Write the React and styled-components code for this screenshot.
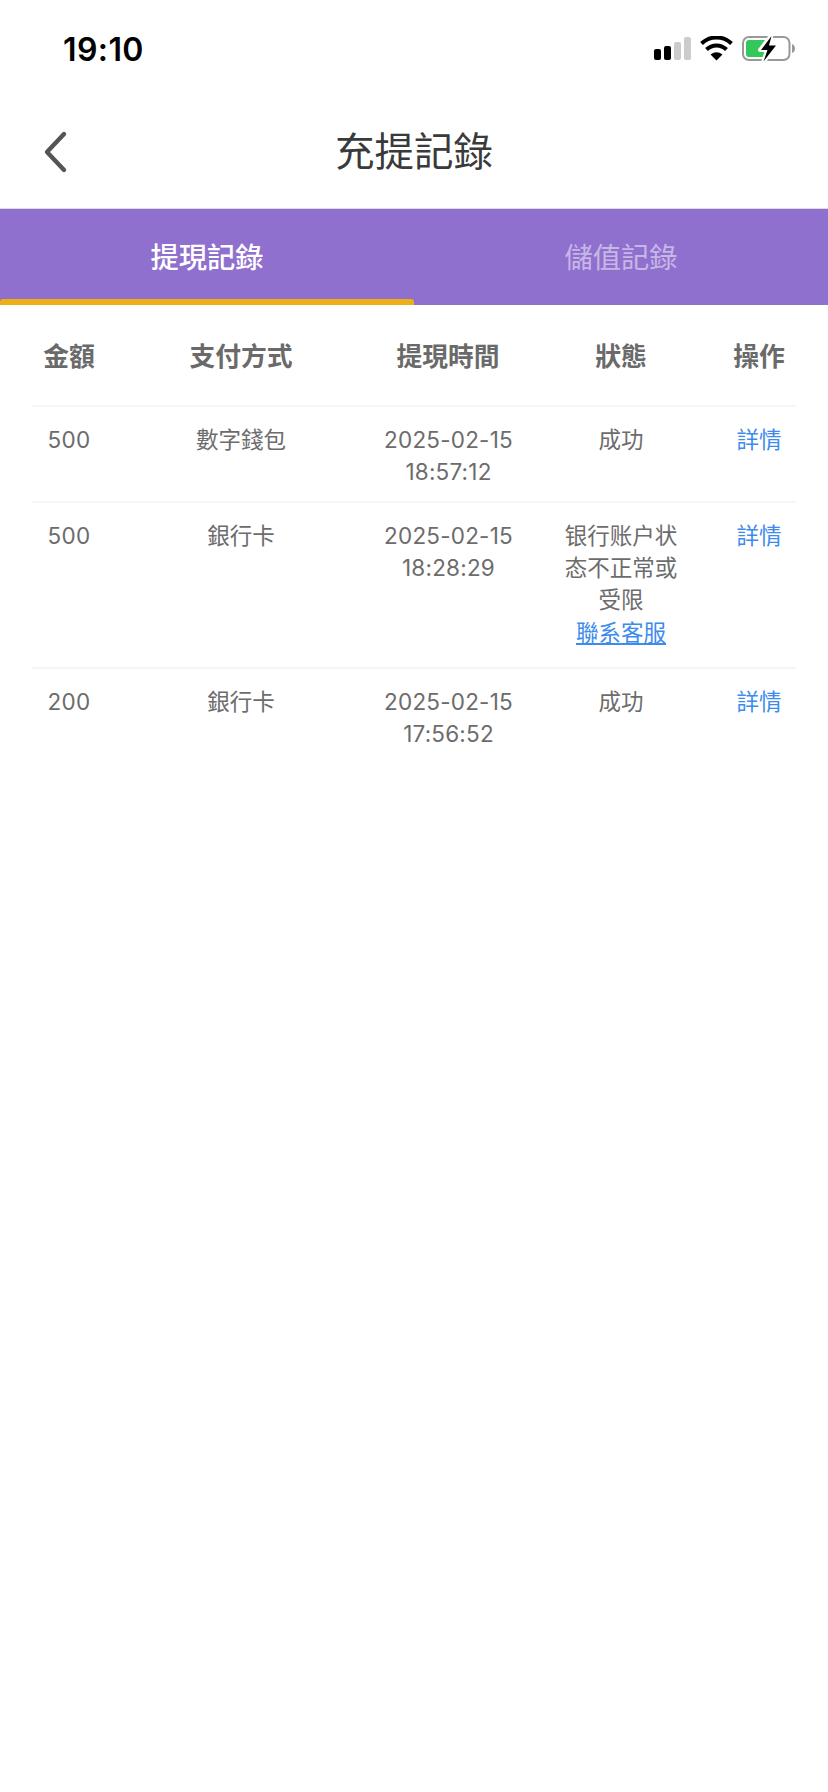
import React from "react";
import styled, { createGlobalStyle } from "styled-components";

const Global = createGlobalStyle`
  html, body { margin: 0; padding: 0; background: #fff; }
  body { font-family: Inter, "Noto Sans CJK TC", sans-serif; }
`;

const Page = styled.div`
  width: 828px;
  height: 1792px;
  background: #fff;
  overflow: hidden;
`;

const StatusBar = styled.div`
  height: 88px;
  display: flex;
  justify-content: space-between;
  align-items: flex-start;
  padding: 30px 33px 0 63px;
  box-sizing: border-box;
`;

const Clock = styled.span`
  font: 600 32px/40px Inter, sans-serif;
  color: #000;
  letter-spacing: 0.4px;
`;

const StatusIcons = styled.svg`
  width: 142px;
  height: 26px;
  margin-top: 6px;
  display: block;
`;

const NavBar = styled.div`
  height: 120px;
  position: relative;
  display: flex;
  align-items: center;
  justify-content: center;
  border-bottom: 1px solid #dcdcdc;
`;

const BackIcon = styled.svg`
  position: absolute;
  left: 42px;
  top: 42px;
  width: 26px;
  height: 44px;
`;

const Title = styled.h1`
  margin: 2px 0 0;
  font: 400 39.5px/48px "Noto Sans CJK TC", sans-serif;
  color: #3a3a3a;
`;

const Tabs = styled.div`
  display: flex;
  height: 96px;
  background: #9070ce;
`;

const Tab = styled.div`
  flex: 1;
  position: relative;
  display: flex;
  align-items: center;
  justify-content: center;
  padding-bottom: 3px;
  font: ${(p) => (p.$active ? 500 : 400)} 28.3px/40px "Noto Sans CJK TC", sans-serif;
  color: ${(p) => (p.$active ? "#fff" : "rgba(255,255,255,0.5)")};
  box-sizing: border-box;

  ${(p) =>
    p.$active &&
    `&::after {
      content: "";
      position: absolute;
      left: 0;
      right: 0;
      bottom: 0;
      height: 6px;
      border-radius: 3px 3px 0 0;
      background: #ecb016;
    }`}
`;

const Table = styled.div`
  margin: 0 32px;
`;

const Row = styled.div`
  display: grid;
  grid-template-columns: 74px 270px 144px 202px 74px;
  border-bottom: 2px solid ${(p) => (p.$last ? "transparent" : "#f5f5f5")};
  padding: ${(p) => (p.$head ? "30px 0" : "17px 0 13px")};
`;

const HeadCell = styled.div`
  text-align: center;
  font: 600 25.8px/40px "Noto Sans CJK TC", sans-serif;
  color: #6a6a6a;
`;

const Cell = styled.div`
  text-align: center;
  font: 400 22.5px/32px Inter, "Noto Sans CJK TC", sans-serif;
  color: #6c6c6c;
`;

const TimeCell = styled(Cell)`
  letter-spacing: 0.2px;
  padding-left: 1px;
`;

const Amount = styled(Cell)`
  letter-spacing: 0.3px;
`;

const StatusCell = styled(Cell)`
  padding: 0 34px;
`;

const Support = styled.a`
  display: block;
  margin: 1px 0 5px;
  color: #3b8cec;
  text-decoration: underline;
`;

const Detail = styled.a`
  color: #3b8cec;
`;

const rows = [
  { amount: "500", method: "數字錢包", date: "2025-02-15", time: "18:57:12", status: "成功" },
  { amount: "500", method: "銀行卡", date: "2025-02-15", time: "18:28:29", status: "银行账户状态不正常或受限", support: true },
  { amount: "200", method: "銀行卡", date: "2025-02-15", time: "17:56:52", status: "成功", last: true },
];

const heads = ["金額", "支付方式", "提現時間", "狀態", "操作"];

export default function App() {
  return (
    <Page>
      <Global />
      <StatusBar>
        <Clock>19:10</Clock>
        <StatusIcons viewBox="652 37 142 26">
          <rect x="653" y="50" width="7" height="11" rx="2" fill="#000" />
          <rect x="663" y="47" width="7" height="14" rx="2" fill="#000" />
          <rect x="673" y="43" width="7" height="18" rx="2" fill="#ccc" />
          <rect x="683" y="38" width="7" height="23" rx="2" fill="#ccc" />
          <path d="M700.5 44.5 C709 36.5 722 36.5 730.5 44.5" fill="none" stroke="#000" strokeWidth="4" strokeLinecap="butt" />
          <path d="M705.5 50.5 C711 45 720 45 725.5 50.5" fill="none" stroke="#000" strokeWidth="4" strokeLinecap="butt" />
          <path d="M709.5 55.5 Q715.5 51 721.5 55.5 L715.5 61.5 Z" fill="#000" />
          <rect x="742" y="38" width="46.5" height="23" rx="6" fill="none" stroke="#999" strokeWidth="2" />
          <path d="M791 45 Q794 46 794 49.5 Q794 53 791 54 Z" fill="#999" />
          <rect x="745" y="41" width="22" height="17" rx="3" fill="#34c759" />
          <path d="M770.5 36 L759 51 L766 51 L762 63.5 L775.5 46.5 L768 46.5 Z" fill="#fff" stroke="#fff" strokeWidth="4" strokeLinejoin="round" />
          <path d="M770.5 37 L760 51 L766.5 51 L762.5 62.5 L775 46.5 L768 46.5 Z" fill="#000" />
        </StatusIcons>
      </StatusBar>
      <NavBar>
        <BackIcon viewBox="0 0 26 44">
          <path d="M22 4 L5 22 L22 40" fill="none" stroke="#555" strokeWidth="4.4" strokeLinecap="round" strokeLinejoin="round" />
        </BackIcon>
        <Title>充提記錄</Title>
      </NavBar>
      <Tabs>
        <Tab $active>提現記錄</Tab>
        <Tab>儲值記錄</Tab>
      </Tabs>
      <Table>
        <Row $head>
          {heads.map((h) => (
            <HeadCell key={h}>{h}</HeadCell>
          ))}
        </Row>
        {rows.map((r) => (
          <Row key={r.time} $last={r.last}>
            <Amount>{r.amount}</Amount>
            <Cell>{r.method}</Cell>
            <TimeCell>
              {r.date}
              <br />
              {r.time}
            </TimeCell>
            <StatusCell>
              {r.status}
              {r.support && <Support>聯系客服</Support>}
            </StatusCell>
            <Cell>
              <Detail>詳情</Detail>
            </Cell>
          </Row>
        ))}
      </Table>
    </Page>
  );
}
